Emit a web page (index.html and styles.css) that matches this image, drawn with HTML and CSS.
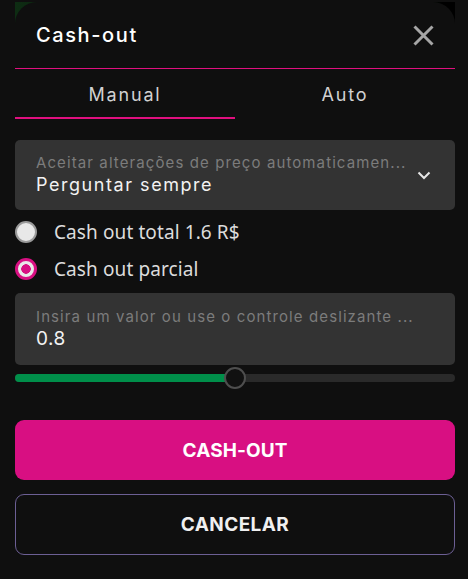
FILE: index.html
```html
<!DOCTYPE html>
<html lang="pt">
<head>
<meta charset="utf-8">
<link rel="stylesheet" href="styles.css">
</head>
<body>
<div class="backdrop"></div>
<div class="modal">
  <header class="header">
    <h1 class="title">Cash-out</h1>
    <button class="close" aria-label="Fechar">
      <svg width="21" height="21" viewBox="0 0 21 21"><path d="M1.5 1.5 L19.5 19.5 M19.5 1.5 L1.5 19.5" stroke="#a6a6a6" stroke-width="3"/></svg>
    </button>
  </header>
  <div class="divider"></div>
  <nav class="tabs">
    <div class="tab active">Manual</div>
    <div class="tab">Auto</div>
  </nav>
  <div class="field select">
    <div class="field-text">
      <div class="field-label">Aceitar alterações de preço automaticamen...</div>
      <div class="field-value">Perguntar sempre</div>
    </div>
    <svg class="chev" width="14" height="9" viewBox="0 0 14 9"><path d="M1.5 1.5 L7 7 L12.5 1.5" fill="none" stroke="#e6e6e6" stroke-width="2"/></svg>
  </div>
  <div class="radios">
    <label class="radio"><span class="dot"></span><span class="radio-label">Cash out total 1.6 R$</span></label>
    <label class="radio checked"><span class="dot"></span><span class="radio-label">Cash out parcial</span></label>
  </div>
  <div class="field input">
    <div class="field-text">
      <div class="field-label">Insira um valor ou use o controle deslizante ...</div>
      <div class="field-value num">0.8</div>
    </div>
  </div>
  <div class="slider">
    <div class="slider-fill" style="width: 50%"></div>
    <div class="slider-thumb" style="left: 50%"></div>
  </div>
  <div class="actions">
    <button class="btn primary">CASH-OUT</button>
    <button class="btn secondary">CANCELAR</button>
  </div>
</div>
</body>
</html>
```
FILE: styles.css
```css
* { box-sizing: border-box; }
html, body { margin: 0; padding: 0; }
body {
  background: #0f0f0f;
  width: 468px;
  height: 579px;
  overflow: hidden;
  position: relative;
  font-family: "Open Sans", "Noto Sans", sans-serif;
}
.backdrop {
  position: absolute;
  left: 15px;
  top: 2px;
  width: 440px;
  height: 30px;
  background: linear-gradient(90deg, #0e2d13 0%, #0b1a0e 15%, #0c0f0c 60%, #0c2410 92%, #000 97%);
}
.modal {
  position: relative;
  margin-left: 15px;
  width: 440px;
  padding-top: 2px;
}
.header {
  display: flex;
  align-items: center;
  justify-content: space-between;
  height: 66px;
  padding: 0 21px 0 21px;
  background: #0f0f0f;
  border-radius: 22px 22px 0 0;
}
.divider {
  height: 1px;
  background: #e0107f;
}
.title {
  margin: 0;
  font-family: "Inter", sans-serif;
  font-weight: 500;
  font-size: 20px;
  letter-spacing: 1.6px;
  color: #ffffff;
}
.close {
  background: none;
  border: 0;
  padding: 0;
  display: flex;
  width: 21px;
  height: 21px;
  margin-top: 1px;
}
.tabs {
  display: flex;
}
.tab {
  flex: 1;
  text-align: center;
  height: 50px;
  line-height: 52px;
  font-family: "Inter", sans-serif;
  font-size: 18px;
  color: #d2d2d2;
  letter-spacing: 1.8px;
}
.tab.active {
  border-bottom: 2px solid #e0107f;
}
.field {
  background: #333333;
  border-radius: 5px;
  display: flex;
  align-items: center;
  padding: 0 21px;
  height: 70px;
}
.select { margin-top: 21px; }
.field-text { flex: 1; min-width: 0; }
.field-label {
  font-family: "Inter", sans-serif;
  font-size: 15px;
  letter-spacing: 1.1px;
  color: #7c7c7c;
  white-space: nowrap;
  line-height: 20px;
}
.field-value {
  font-family: "Inter", sans-serif;
  font-size: 18px;
  letter-spacing: 1.55px;
  color: #f2f2f2;
  line-height: 24px;
}
.chev { margin-right: 3px; margin-top: 1px; }
.radios {
  display: flex;
  flex-direction: column;
  padding: 3px 0 6px;
}
.radio {
  display: flex;
  align-items: center;
  height: 37px;
  gap: 17px;
}
.dot {
  flex: none;
  width: 22px;
  height: 22px;
  border-radius: 50%;
  background: #e8e8e8;
  border: 2px solid #9a9a9a;
}
.radio.checked .dot {
  border: 3px solid #d80f82;
  background: radial-gradient(circle, #d80f82 0 4.5px, #e8e8e8 5px);
}
.radio-label {
  font-family: "Noto Sans", "Open Sans", sans-serif;
  font-size: 19px;
  letter-spacing: 0.1px;
  color: #dcdcdc;
}
.input { height: 72px; }
.num { font-size: 19px; letter-spacing: 0.5px; }
.slider {
  position: relative;
  height: 8px;
  margin-top: 9px;
  background: #2a2a2a;
  border-radius: 4px;
}
.slider-fill {
  height: 100%;
  background: #008f4a;
  border-radius: 4px 0 0 4px;
}
.slider-thumb {
  position: absolute;
  top: 50%;
  width: 22px;
  height: 22px;
  margin: -11px 0 0 -11px;
  border-radius: 50%;
  background: #111111;
  border: 2px solid #4e4e4e;
}
.actions {
  display: flex;
  flex-direction: column;
  gap: 14px;
  margin-top: 38px;
}
.btn {
  height: 60px;
  border-radius: 9px;
  font-family: "Inter", sans-serif;
  font-weight: 700;
  font-size: 19px;
  letter-spacing: 0.1px;
  color: #ffffff;
}
.primary { background: #d80f82; border: 0; }
.secondary { background: #0f0f0f; border: 1px solid #6c5f94; height: 61px; color: #f0f0f0; letter-spacing: 0.4px; }
```
